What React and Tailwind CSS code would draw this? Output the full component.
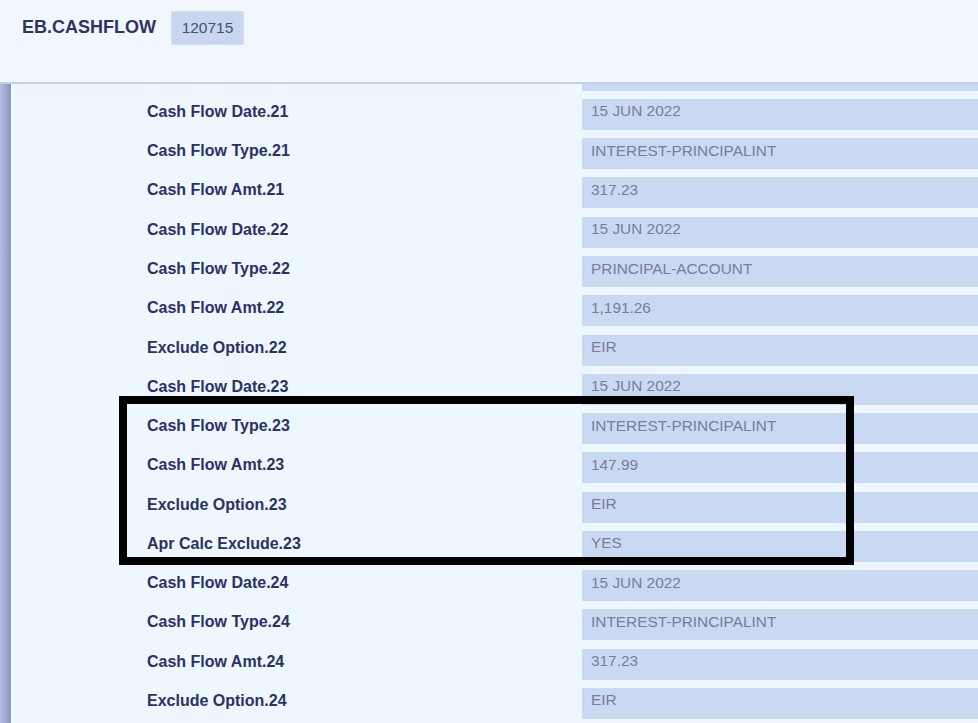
import React from 'react';

const rows = [
  ['Cash Flow Date.21', '15 JUN 2022'],
  ['Cash Flow Type.21', 'INTEREST-PRINCIPALINT'],
  ['Cash Flow Amt.21', '317.23'],
  ['Cash Flow Date.22', '15 JUN 2022'],
  ['Cash Flow Type.22', 'PRINCIPAL-ACCOUNT'],
  ['Cash Flow Amt.22', '1,191.26'],
  ['Exclude Option.22', 'EIR'],
  ['Cash Flow Date.23', '15 JUN 2022'],
  ['Cash Flow Type.23', 'INTEREST-PRINCIPALINT'],
  ['Cash Flow Amt.23', '147.99'],
  ['Exclude Option.23', 'EIR'],
  ['Apr Calc Exclude.23', 'YES'],
  ['Cash Flow Date.24', '15 JUN 2022'],
  ['Cash Flow Type.24', 'INTEREST-PRINCIPALINT'],
  ['Cash Flow Amt.24', '317.23'],
  ['Exclude Option.24', 'EIR'],
];

const FieldRow = ({ label, value }) => (
  <div className="flex h-[31px] items-start">
    <div className="w-[570px] shrink-0 pl-[135px] pt-[3px] text-[16px] leading-[20px] font-bold text-[#2b3263]">
      {label}
    </div>
    <div className="flex-1 h-full bg-[#c9d9f1] pl-[9px] pt-[2.5px] text-[15.4px] leading-[20px] text-[#7a7c9b]">
      {value}
    </div>
  </div>
);

export default function App() {
  return (
    <div
      className="relative w-[978px] h-[723px] overflow-hidden bg-[#eef6fe]"
      style={{ fontFamily: '"Liberation Sans", Arial, sans-serif' }}
    >
      {/* Header */}
      <header className="h-[84px] bg-[#f0f7fe] border-b-2 border-[#c7d0e6] flex items-start gap-[15px] pl-[22px] pt-[10.7px]">
        <h1 className="h-[34px] flex items-center text-[18px] font-bold text-[#2d3461]">EB.CASHFLOW</h1>
        <span className="h-[34px] w-[73px] flex items-center justify-center bg-[#c8d7ef] border border-[#d6e0f1] text-[15.5px] text-[#4b5070]">
          120715
        </span>
      </header>

      {/* Body */}
      <div className="flex h-full">
        <div className="w-[12px] shrink-0 bg-gradient-to-r from-[#b6bee2] to-[#8a92c4] border-r border-white" />
        <div className="flex-1 flex flex-col gap-[8.27px]">
          <div className="flex h-[6.7px]">
            <div className="w-[570px] shrink-0" />
            <div className="flex-1 bg-[#c9d9f1]" />
          </div>
          {rows.map(([label, value]) => (
            <FieldRow key={label} label={label} value={value} />
          ))}
        </div>
      </div>

      {/* Annotation box */}
      <div className="absolute left-[119px] top-[396px] w-[735px] h-[169px] border-[8px] border-black" />
    </div>
  );
}
